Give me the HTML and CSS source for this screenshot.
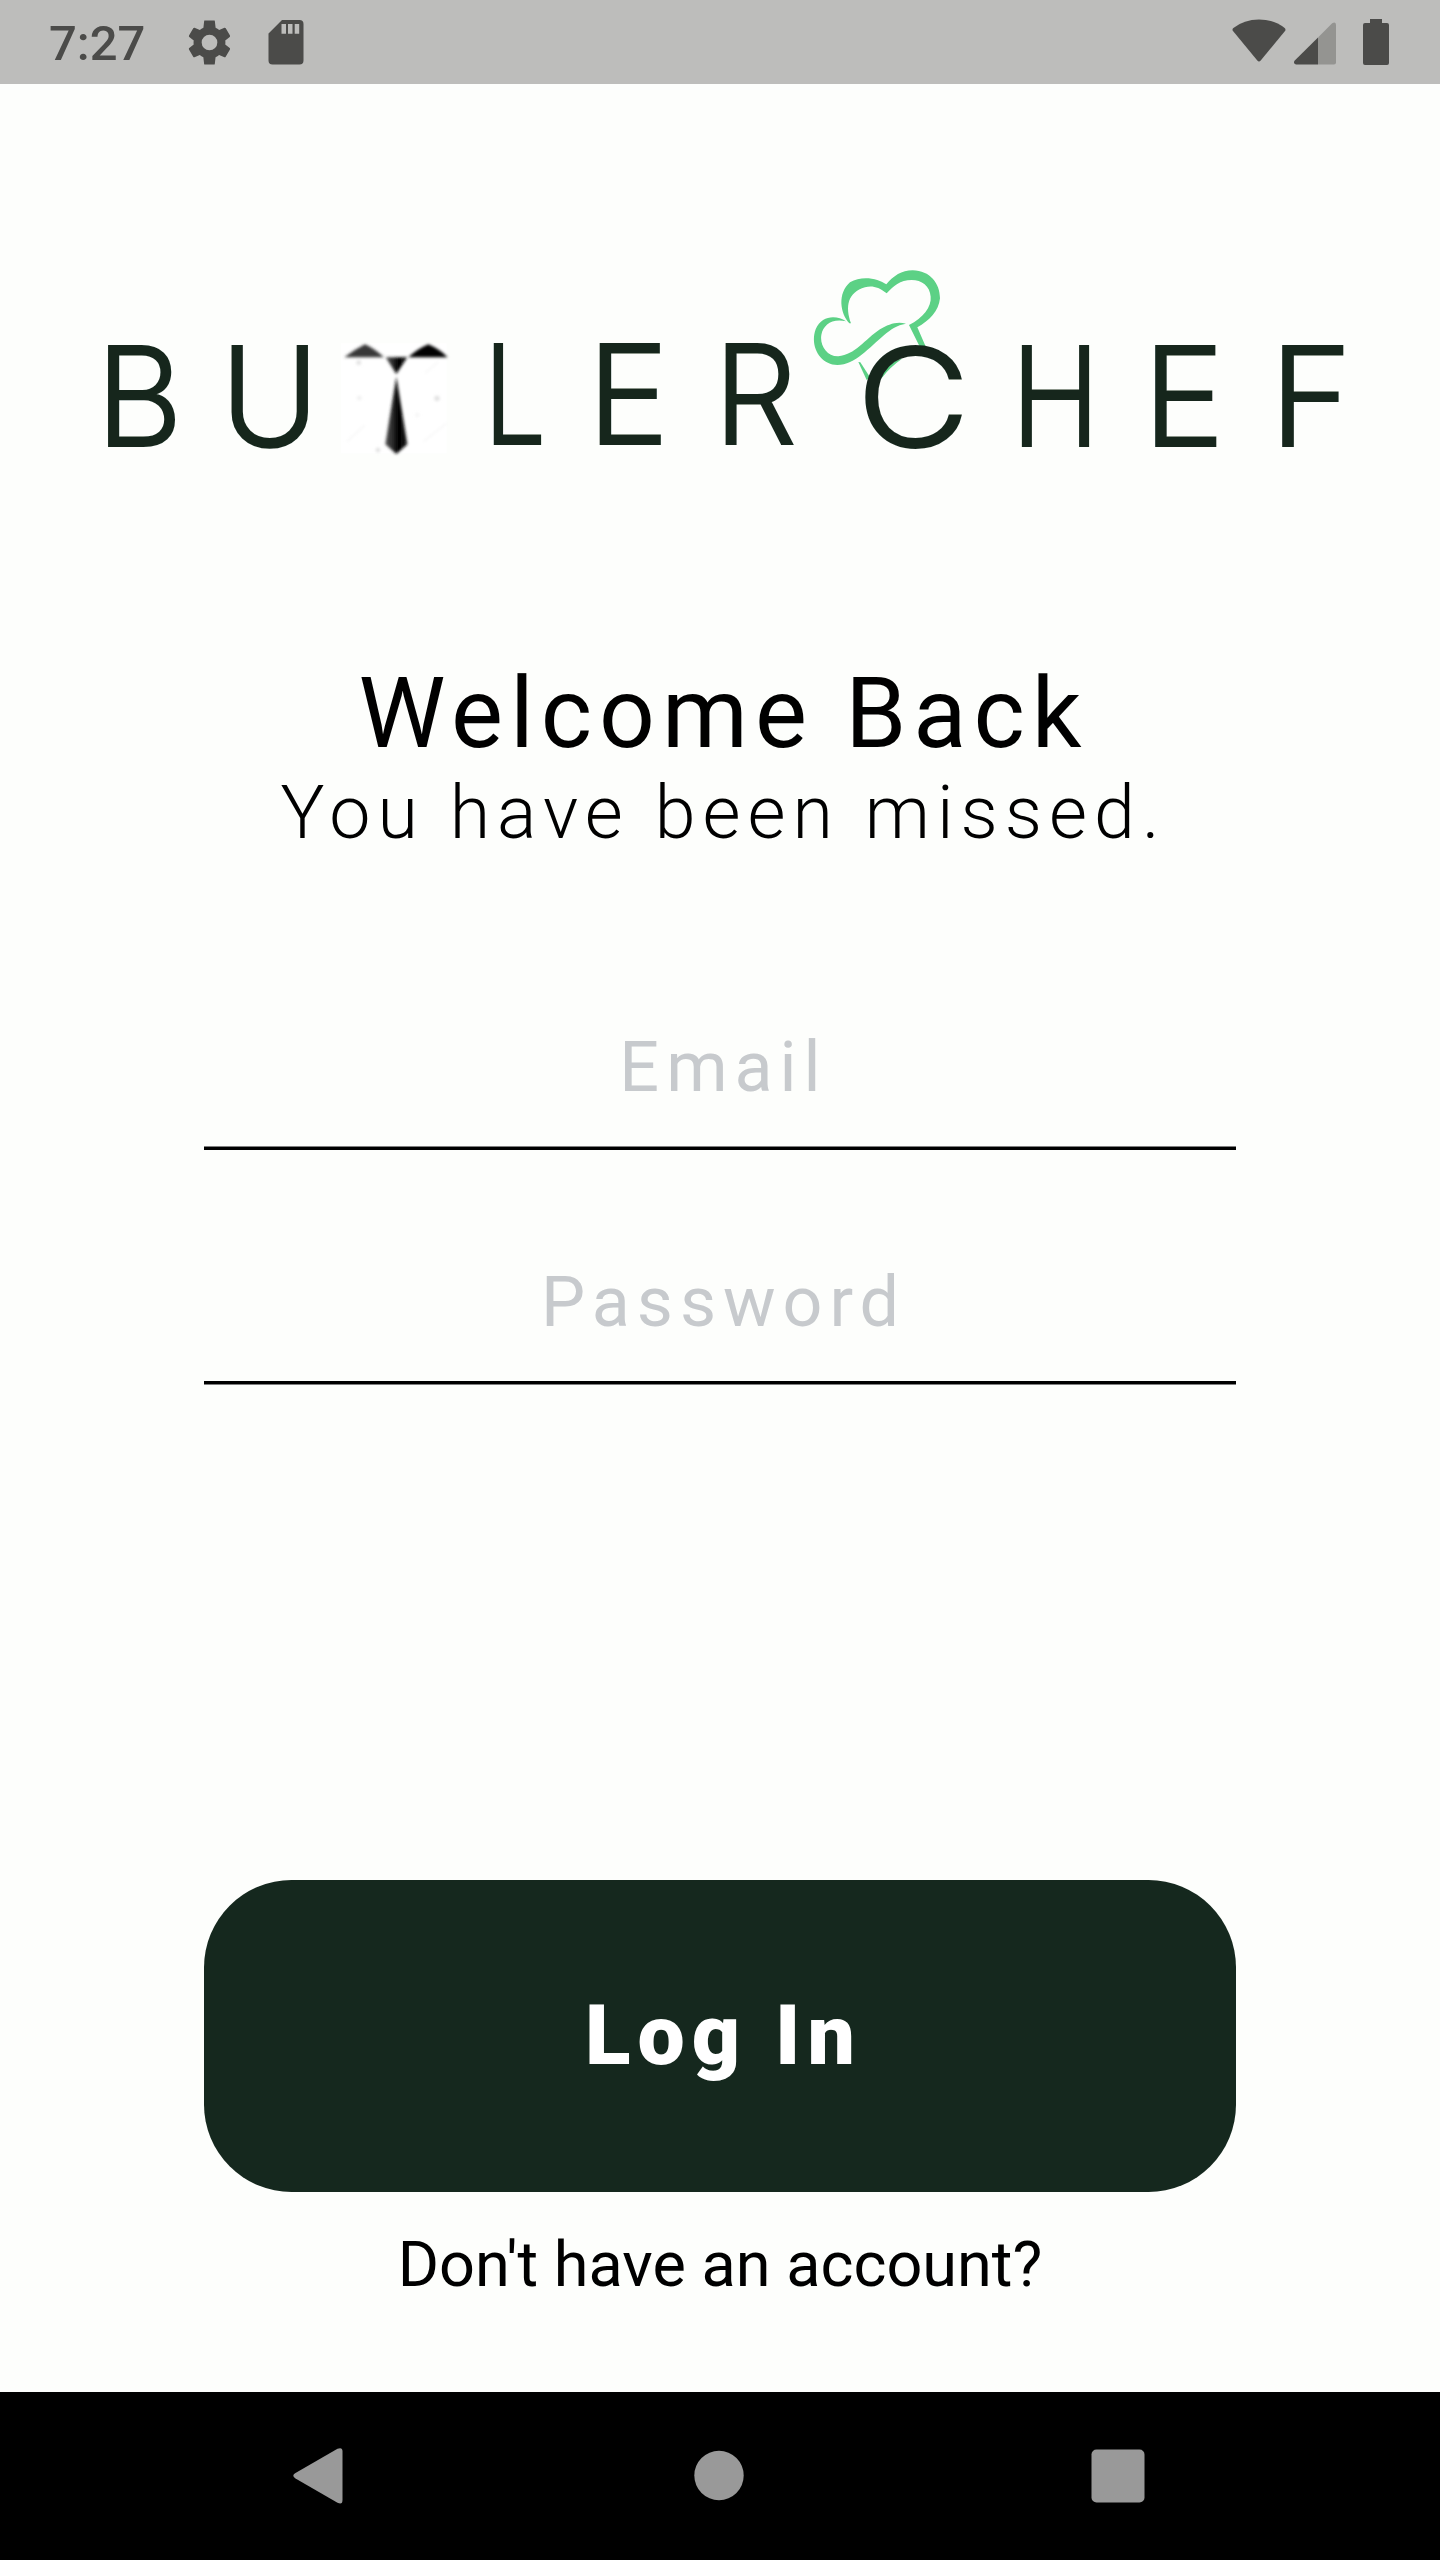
FILE: index.html
```html
<!DOCTYPE html>
<html lang="en">
<head>
<meta charset="utf-8">
<title>ButlerChef</title>
<link rel="stylesheet" href="styles.css">
</head>
<body>
<div class="screen">
  <header class="status">
    <span class="clock">7:27</span>
    <svg class="gear" viewBox="0 0 24 24"><path d="M19.14 12.94c.04-.3.06-.61.06-.94 0-.32-.02-.64-.07-.94l2.03-1.58c.18-.14.23-.41.12-.61l-1.92-3.32c-.12-.22-.37-.29-.59-.22l-2.39.96c-.5-.38-1.03-.7-1.62-.94L14.4 2.1c-.04-.06-.2-.1-.3-.1H9.9c-.1 0-.26.04-.3.1l-.36 3.25c-.59.24-1.13.57-1.62.94l-2.39-.96c-.22-.08-.47 0-.59.22L2.72 8.87c-.12.21-.08.47.12.61l2.03 1.58c-.05.3-.09.63-.09.94s.02.64.07.94l-2.03 1.58c-.18.14-.23.41-.12.61l1.92 3.32c.12.22.37.29.59.22l2.39-.96c.5.38 1.03.7 1.62.94l.36 3.25c.04.06.2.1.3.1h4.2c.1 0 .26-.04.3-.1l.36-3.25c.59-.24 1.13-.56 1.62-.94l2.39.96c.22.08.47 0 .59-.22l1.92-3.32c.12-.22.07-.47-.12-.61l-2.01-1.58zM12 15.55A3.55 3.55 0 1 1 12 8.45a3.55 3.55 0 0 1 0 7.1z"/></svg>
    <svg class="sd" viewBox="0 0 36 45"><path fill-rule="evenodd" d="M14 0H31.500Q35.500 0 35.500 4V40.500Q35.500 44.500 31.500 44.500H4.500Q.5 44.500 .5 40.500V13.500ZM13.500 4V13.700H18V4ZM20 4V13.700H24.500V4ZM26.700 4V13.700H31.200V4Z"/></svg>
    <span class="spacer"></span>
    <svg class="wifi" viewBox="0 0 54 44"><path d="M1 12Q-.2 10.400 1.400 9Q12 .5 27 .5T52.600 9Q54.200 10.400 53 12L28.700 41.500Q27 43.500 25.300 41.500Z"/></svg>
    <svg class="signal" viewBox="0 0 42 43"><path opacity=".36" d="M24 15.500L38.200 1.200Q42 -1 42 3V40.500Q42 42.500 40 42.500H24Z"/><path d="M24 15.500V42.500H2Q-1 41.500 .5 38.800Z"/></svg>
    <svg class="battery" viewBox="0 0 26 46"><path d="M7 0H19V4H24Q26 4 26 6V44Q26 46 24 46H2Q0 46 0 44V6Q0 4 2 4H7Z"/></svg>
  </header>

  <main class="content">
    <svg class="logo" viewBox="80 250 1280 250" role="img" aria-label="ButlerChef">
      <defs>
        <linearGradient id="silk"><stop offset="0" stop-color="#505050"/><stop offset=".35" stop-color="#282828"/><stop offset=".6" stop-color="#000"/><stop offset="1" stop-color="#1a1a1a"/></linearGradient>
        <filter id="soft" x="-10%" y="-10%" width="120%" height="120%"><feGaussianBlur stdDeviation="4"/></filter>
        <filter id="edge" x="-10%" y="-10%" width="120%" height="120%"><feGaussianBlur stdDeviation="2.200"/></filter>
        <filter id="type" x="-5%" y="-10%" width="110%" height="120%"><feGaussianBlur stdDeviation=".6"/></filter>
      </defs>
      <g transform="translate(80 310) scale(.33333)">
        <path fill="#fff" d="M783 100H1100V430H783Z"/>
        <g filter="url(#soft)">
          <path fill="none" stroke="#f5f5f5" stroke-width="4" d="M800 395L855 345M1030 395L1100 340M1035 190L1075 155"/>
          <g fill="#e0e0e0"><circle cx="836" cy="158" r="7"/><circle cx="1071" cy="265" r="8"/><circle cx="894" cy="420" r="7"/><circle cx="838" cy="264" r="7" opacity=".5"/><circle cx="1012" cy="315" r="6" opacity=".4"/></g>
        </g>
      </g>
      <g transform="translate(80 310) scale(.33333)" filter="url(#soft)">
        <path fill="#383838" d="M793 142Q825 118 855 103Q885 117 912 142Z"/>
        <path d="M985 142Q1010 118 1045 103Q1080 118 1103 142Z"/>
        <path fill="url(#silk)" d="M917 142H982L949 192Z"/>
        <path fill="url(#silk)" d="M949 200L916 403L949 432L982 403Z"/>
      </g>
      <g class="hat" transform="translate(780 250) scale(.33333)" filter="url(#edge)">
        <path d="M208 220C180 190 172 130 210 97C245 75 295 85 319 103C340 78 365 61 398 61C450 62 480 100 480 145C476 185 447 212 412 232L438 292H420L387 225C430 203 455 170 452 140C450 108 425 90 395 90C360 90 340 108 320 130C295 110 275 106 255 112C203 127 195 170 213 220Z"/>
        <path d="M198 214C170 195 125 195 107 238C88 290 122 345 172 345C225 345 270 290 310 257C335 236 350 226 378 221C350 213 325 223 300 238C255 268 225 315 175 319C140 320 119 285 124 255C130 225 155 205 198 214Z"/>
        <path d="M235 336L260 390L270 382L241 337Z"/>
        <path d="M300 380C315 355 335 335 368 325Q330 352 306 383Z"/>
      </g>
      <g class="wordmark" filter="url(#type)">
        <text transform="translate(96.300 446) scale(.969 1)">B</text>
        <text transform="translate(220.300 446) scale(.982 1)">U</text>
        <text transform="translate(484 443.600) scale(.803 1)">L</text>
        <text transform="translate(587.400 443.600)">E</text>
        <text transform="translate(714 443.600) scale(.954 1)">R</text>
        <text transform="translate(856.500 446.800) scale(1.137 1)">C</text>
        <text transform="translate(1011.200 446) scale(.873 1)">H</text>
        <text transform="translate(1143 446)">E</text>
        <text transform="translate(1269.800 446) scale(1.019 1)">F</text>
      </g>
    </svg>

    <h1 class="title">Welcome Back</h1>
    <p class="subtitle">You have been missed.</p>

    <form class="form">
      <div class="field"><span class="placeholder">Email</span></div>
      <div class="field field-last"><span class="placeholder">Password</span></div>
      <button class="login" type="button">Log In</button>
    </form>
    <p class="signup">Don't have an account?</p>
  </main>

  <nav class="navbar">
    <svg viewBox="0 0 60 60"><path d="M7.500 27L49.500 2.800Q54.500 .8 54.500 5.500V54Q54.500 59.200 49.500 56.700L7.500 32.500Q3 29.700 7.500 27Z"/></svg>
    <svg viewBox="0 0 60 60"><circle cx="31" cy="29.500" r="24.700"/></svg>
    <svg viewBox="0 0 60 60"><rect x="3.500" y="3.500" width="53" height="53" rx="5"/></svg>
  </nav>
</div>
</body>
</html>
```
FILE: styles.css
```css
* { box-sizing: border-box; }

body {
  margin: 0;
  font-family: Roboto, "Liberation Sans", sans-serif;
  color: #000;
}

.screen {
  display: flex;
  flex-direction: column;
  width: 1440px;
  height: 2560px;
  background: #fdfefc;
}

.status {
  display: flex;
  align-items: flex-start;
  height: 84px;
  padding: 0 51px 0 49px;
  background: #bdbdbb;
  fill: #4b4b49;
}

.clock {
  width: 134px;
  padding-top: 15px;
  font-size: 49px;
  font-weight: 500;
  line-height: 57px;
  color: #4b4b49;
}

.gear { width: 53px; height: 53px; margin-top: 16px; }
.sd { width: 36px; height: 45px; margin: 20px 0 0 32px; }
.spacer { flex: 1; }
.wifi { width: 54px; height: 44px; margin-top: 19px; }
.signal { width: 42px; height: 43px; margin: 21.500px 27px 0 8px; }
.battery { width: 26px; height: 46px; margin-top: 19px; }

.content {
  display: flex;
  flex: 1;
  flex-direction: column;
  align-items: center;
}

.logo {
  width: 1280px;
  height: 250px;
  margin-top: 166px;
  overflow: visible;
}

.wordmark {
  fill: #15281e;
  stroke: #15281e;
  stroke-width: 2px;
  font-family: Inter, "Liberation Sans", sans-serif;
  font-size: 137px;
  font-weight: 300;
}

.hat { fill: #5bd185; }

.title {
  margin: 156px 0 0;
  padding-left: 7px;
  font-size: 98px;
  font-weight: 400;
  letter-spacing: 7px;
  line-height: 115px;
}

.subtitle {
  margin: -1px 0 0;
  padding-left: 7px;
  font-size: 73.500px;
  font-weight: 300;
  letter-spacing: 7px;
  line-height: 86px;
}

.form {
  display: flex;
  flex-direction: column;
  width: 1032px;
  margin-top: 170px;
}

.field {
  height: 124px;
  padding-left: 7px;
  background: linear-gradient(#808080 1px, #000 1px) bottom / 100% 4px no-repeat;
  text-align: center;
}

.field-last {
  height: 125px;
  margin-top: 110px;
  padding-top: 1px;
  background-image: linear-gradient(#000 3px, #808080 3px);
}

.placeholder {
  display: block;
  font-size: 70px;
  letter-spacing: 7px;
  line-height: 82px;
  color: #c7cacd;
}

.login {
  height: 311.500px;
  margin-top: 495px;
  padding: 0 0 0 7px;
  border: 0;
  border-radius: 87.500px;
  background: #15281e;
  color: #fff;
  font-family: inherit;
  font-size: 84px;
  font-weight: 900;
  letter-spacing: 7px;
}

.signup {
  margin: 36px 0 0;
  font-size: 63px;
  line-height: 74px;
}

.navbar {
  display: flex;
  align-items: center;
  justify-content: space-between;
  height: 168px;
  padding: 0 292px 0 288px;
  background: #000;
  fill: #999;
}

.navbar svg { width: 60px; height: 60px; }
```
